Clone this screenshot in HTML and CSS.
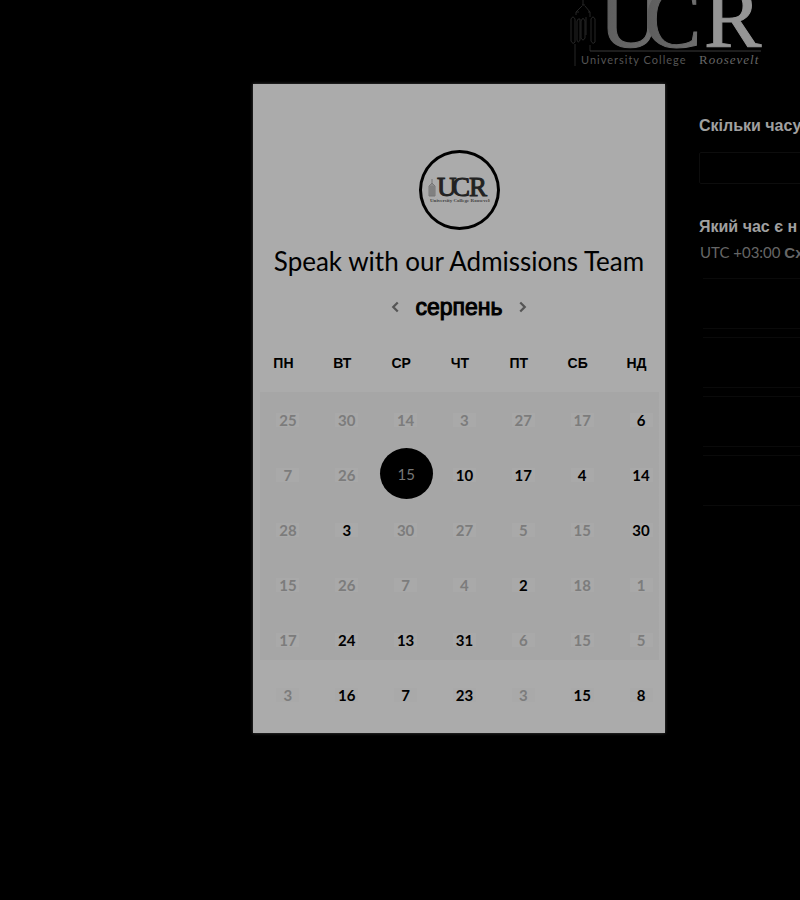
FILE: index.html
```
<!DOCTYPE html>
<html lang="uk">
<head>
<meta charset="utf-8">
<title>Speak with our Admissions Team</title>
<link rel="stylesheet" href="styles.css">
</head>
<body>
<header class="top">
  <svg class="logo" viewBox="0 0 196 84" role="img" aria-label="University College Roosevelt">
    <defs>
      <linearGradient id="sheen" x1="0" y1="0" x2="1" y2="0">
        <stop offset="0" stop-color="#5c5c5c"/>
        <stop offset="1" stop-color="#707070"/>
      </linearGradient>
    </defs>
    <g class="tower">
      <path d="M13 14v6M12 20h3M12 21l-6 6v3M15 21l5 6v5M6 27h3M18 27h2"/>
      <path d="M1 34q2-4 4 0v23q-2 3-4-1zM7 36q1-3 3-2v21q-2 4-3 0zM11 36q2-5 4 0v17q-2 4-4 0zM16 32v18M21 34q2-4 4 0v23q-2 3-4-1zM5 59v22M20 60v6"/>
    </g>
    <path class="rule" d="M20 66H191"/>
    <text class="letter" x="29" y="62" fill="url(#sheen)" stroke="url(#sheen)">U</text>
    <text class="letter" x="74" y="62" fill="url(#sheen)" stroke="url(#sheen)">C</text>
    <text class="letter bright" x="134" y="62">R</text>
    <text class="college" x="11" y="79">University College</text>
    <text class="roosevelt" x="129" y="79">R<tspan class="slant">oosevelt</tspan></text>
  </svg>
</header>

<main class="layout">
  <section class="card">
    <div class="avatar">
      <svg viewBox="0 0 62 26" role="img" aria-label="UCR">
        <path class="mini-tower" d="M4 2v4M1 9l3-3 3 3v10H1zM3 9v10M5 9v10"/>
        <text class="mini-letter" x="9" y="19">U</text>
        <text class="mini-letter" x="24" y="19">C</text>
        <text class="mini-letter" x="41" y="19">R</text>
        <text class="mini-name" x="2" y="25">University College Roosevelt</text>
      </svg>
    </div>
    <h1 class="title">Speak with our Admissions Team</h1>
    <div class="month">
      <button class="arrow" aria-label="Назад"><svg viewBox="0 0 8 12"><path d="M6 2L2 6l4 4"/></svg></button>
      <h2 class="month-name">серпень</h2>
      <button class="arrow" aria-label="Вперед"><svg viewBox="0 0 8 12"><path d="M2 2l4 4-4 4"/></svg></button>
    </div>
    <table class="calendar">
      <thead>
        <tr><th>ПН</th><th>ВТ</th><th>СР</th><th>ЧТ</th><th>ПТ</th><th>СБ</th><th>НД</th></tr>
      </thead>
      <tbody>
        <tr><td><button class="day">25</button></td><td><button class="day">30</button></td><td><button class="day">14</button></td><td><button class="day">3</button></td><td><button class="day">27</button></td><td><button class="day">17</button></td><td><button class="day open">6</button></td></tr>
        <tr><td><button class="day">7</button></td><td><button class="day">26</button></td><td class="current"><button class="day selected">15</button></td><td><button class="day open">10</button></td><td><button class="day open">17</button></td><td><button class="day open">4</button></td><td><button class="day open">14</button></td></tr>
        <tr><td><button class="day">28</button></td><td><button class="day open">3</button></td><td><button class="day">30</button></td><td><button class="day">27</button></td><td><button class="day">5</button></td><td><button class="day">15</button></td><td><button class="day open">30</button></td></tr>
        <tr><td><button class="day">15</button></td><td><button class="day">26</button></td><td><button class="day">7</button></td><td><button class="day">4</button></td><td><button class="day open">2</button></td><td><button class="day">18</button></td><td><button class="day">1</button></td></tr>
        <tr><td><button class="day">17</button></td><td><button class="day open">24</button></td><td><button class="day open">13</button></td><td><button class="day open">31</button></td><td><button class="day">6</button></td><td><button class="day">15</button></td><td><button class="day">5</button></td></tr>
        <tr><td><button class="day">3</button></td><td><button class="day open">16</button></td><td><button class="day open">7</button></td><td><button class="day open">23</button></td><td><button class="day">3</button></td><td><button class="day open">15</button></td><td><button class="day open">8</button></td></tr>
      </tbody>
    </table>
  </section>

  <section class="details">
    <label class="question" for="duration">Скільки часу</label>
    <input class="duration" id="duration" type="text">
    <h3 class="question">Який час є н</h3>
    <p class="zone">UTC +03:00 <b>Сх</b></p>
    <ul class="slots"><li></li><li></li><li></li><li></li></ul>
  </section>
</main>
</body>
</html>
```
FILE: styles.css
```
* {
  box-sizing: border-box;
}

body {
  margin: 0;
  min-height: 100vh;
  background: #000;
  color: #000;
  font-family: Lato, "Liberation Sans", sans-serif;
  overflow-x: hidden;
}

h1, h2, h3, p, ul {
  margin: 0;
  padding: 0;
}

button {
  border: 0;
  padding: 0;
  background: none;
  font: inherit;
  cursor: pointer;
}

/* The logo hangs from the upper edge and is trimmed by it. */
.top {
  display: flex;
  justify-content: flex-end;
  align-items: flex-end;
  height: 84px;
  padding: 0 34px 15px 0;
  overflow: hidden;
}

.logo {
  flex: none;
  width: 196px;
  height: 84px;
}

.tower, .rule {
  fill: none;
  stroke: #262626;
  stroke-width: 1;
}

.rule {
  stroke: #3a3a3a;
}

.letter {
  font: 86px "Liberation Serif", serif;
  stroke-width: 1;
}

.bright {
  fill: #959595;
  stroke: #959595;
}

.college {
  font: 11px Lato, sans-serif;
  letter-spacing: 1px;
  fill: #555;
}

.roosevelt {
  font: 13px "Liberation Serif", serif;
  letter-spacing: 1px;
  fill: #666;
}

.slant {
  font-style: italic;
}

.layout {
  display: grid;
  grid-template-columns: 253fr 412fr 135fr;
  align-items: start;
}

.card {
  grid-column: 2;
  padding: 66px 0 11px;
  background: #ababab;
  box-shadow: 0 0 3px #444;
}

.avatar {
  display: flex;
  align-items: center;
  justify-content: center;
  width: 81px;
  height: 80px;
  margin: 0 auto;
  border: 3px solid #000;
  border-radius: 50%;
}

.avatar svg {
  width: 62px;
  height: 26px;
}

.mini-tower {
  fill: #8a8a8a;
  stroke: #777;
  stroke-width: 1;
}

.mini-letter {
  font: 27px "Liberation Serif", serif;
  fill: #222;
  stroke: #222;
  stroke-width: 1;
}

.mini-name {
  font: bold 5px "Liberation Serif", serif;
  fill: #444;
}

.title {
  margin-top: 13px;
  font-size: 26px;
  font-weight: 400;
  line-height: 36px;
  text-align: center;
  white-space: nowrap;
}

.month {
  display: flex;
  align-items: center;
  justify-content: center;
  gap: 15px;
  height: 36px;
  margin-top: 10px;
}

.month-name {
  font: 23px/36px "Liberation Sans", sans-serif;
  -webkit-text-stroke: 1px #000;
}

.arrow {
  display: flex;
}

.arrow svg {
  width: 9px;
  height: 14px;
  fill: none;
  stroke: #555;
  stroke-width: 2;
}

.calendar {
  width: 100%;
  margin-top: 17px;
  border-collapse: collapse;
  table-layout: fixed;
}

.calendar th {
  height: 50px;
  padding: 0 0 8px 2px;
  font: bold 14px/20px "Liberation Sans", sans-serif;
}

.calendar tbody {
  background: linear-gradient(#a6a6a6, #a6a6a6) 7px 0 / calc(100% - 13px) 268px no-repeat;
}

.calendar td {
  height: 55px;
  padding: 0 0 0 11px;
  text-align: center;
}

.calendar .current {
  padding: 0 0 2px 9px;
}

.day {
  display: block;
  width: 23px;
  height: 14px;
  margin: 0 auto;
  background: #a9a9a9;
  color: #7c7c7c;
  font-size: 15px;
  font-weight: 700;
  line-height: 14px;
}

.open {
  color: #000;
}

.selected {
  width: 53px;
  height: 51px;
  border-radius: 50%;
  background: #000;
  color: #777;
  font-weight: 400;
}

.details {
  padding: 32px 0 0 34px;
  min-width: 0;
  overflow: hidden;
  white-space: nowrap;
}

.question {
  display: block;
  color: #a0a0a0;
  font: bold 16px/20px "Liberation Sans", sans-serif;
}

.duration {
  width: 240px;
  height: 32px;
  margin: 16px 0 33px;
  border: 1px solid #0d0d0d;
  border-radius: 2px;
  background: #000;
  color: #a0a0a0;
}

.zone {
  margin-top: 5px;
  padding-left: 1px;
  color: #666;
  font-size: 15px;
  line-height: 20px;
}

.zone b {
  font-family: "Liberation Sans", sans-serif;
}

.slots {
  display: grid;
  gap: 8px;
  width: 240px;
  margin: 15px 0 0 4px;
  list-style: none;
}

.slots li {
  height: 51px;
  border: 1px solid #0a0a0a;
  border-width: 1px 0;
}
```
